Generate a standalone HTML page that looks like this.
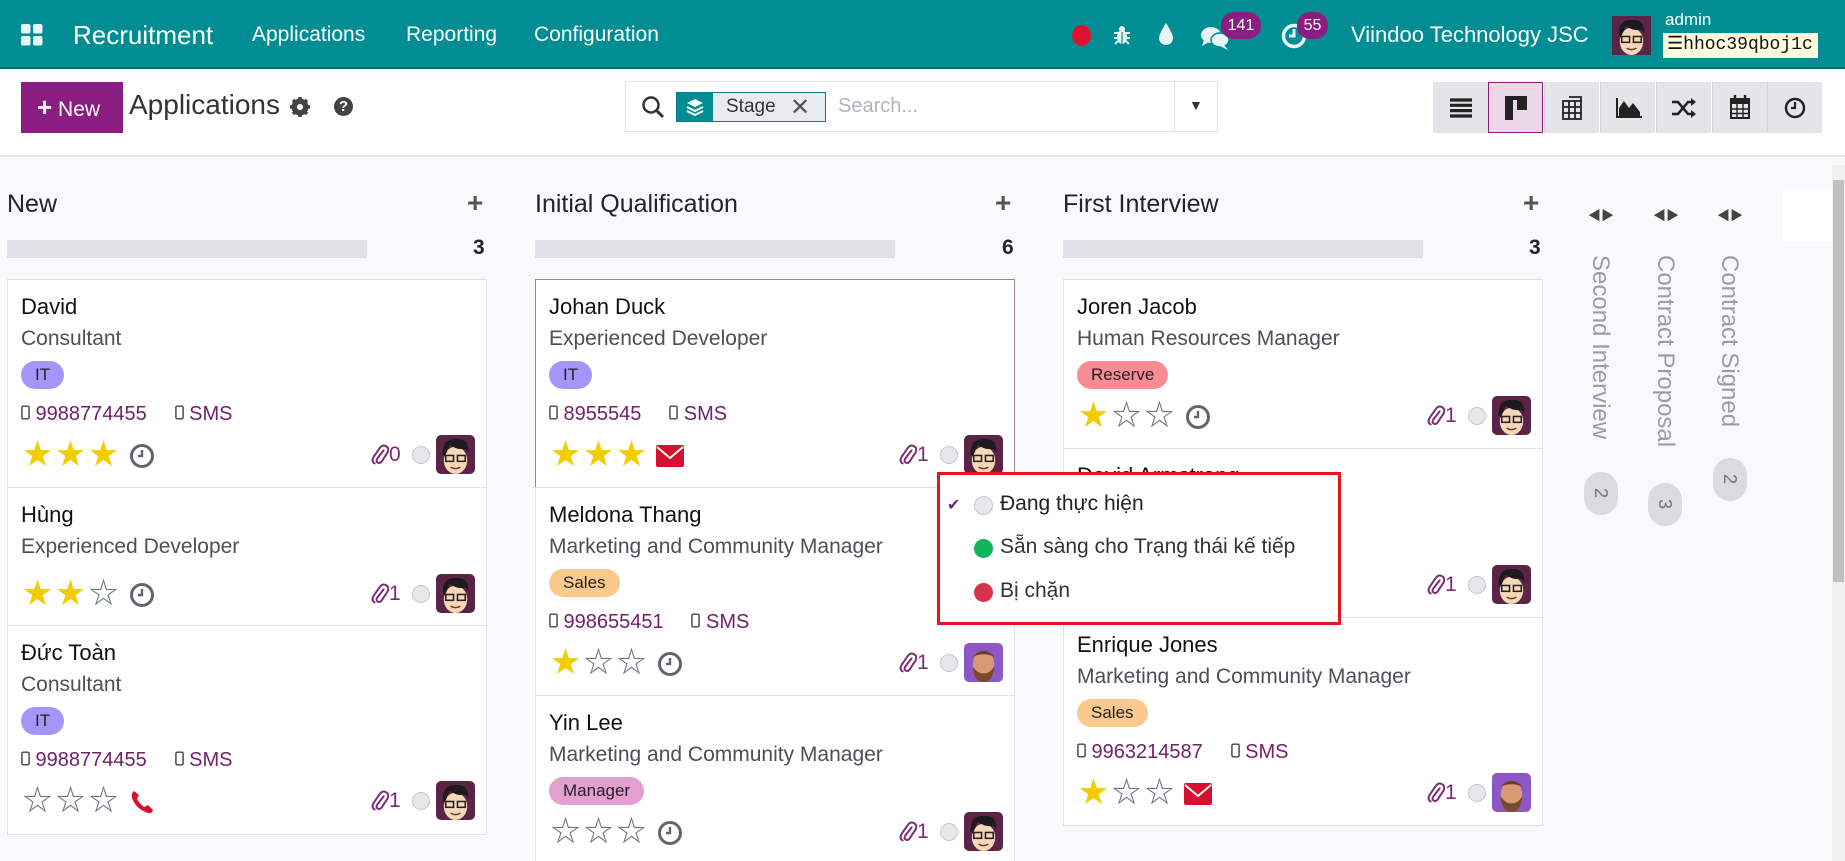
<!DOCTYPE html>
<html style="overflow:hidden;height:861px"><head><meta charset="utf-8">
<style>
*{box-sizing:border-box;margin:0;padding:0}
body{width:1845px;height:861px;overflow:hidden;font-family:"Liberation Sans","Noto Sans CJK SC",sans-serif;background:#f8f9fa;position:relative;color:#212529}
.abs{position:absolute}
.nav{left:0;top:0;width:1845px;height:69px;background:#018d94;border-bottom:2px solid #0b6a70;color:#fff}
.nav .t{position:absolute;top:1px;line-height:68px;white-space:nowrap}
.cp{left:0;top:69px;width:1845px;height:88px;background:#fff;border-bottom:2px solid #e3e6ea}
.ch{position:absolute;left:0;top:188px;font-size:25px;color:#212529}
.card{position:absolute;width:480px;background:#fff;border:1px solid #dee2e6;overflow:hidden}
.card>div{position:absolute;left:13px;white-space:nowrap}
.n{top:13px;font-size:22px;line-height:28px;color:#111}
.s{top:45px;font-size:21px;line-height:28px;color:#495057}
.tg{top:81px;height:28px;line-height:28px;border-radius:14px;padding:0 14px;font-size:17px;color:#222}
.p{top:120px;font-size:20px;line-height:28px;color:#71206b}
.f{height:40px;width:454px}
.f1{top:155px}.f2{top:86px}.f3{top:116px}
.st{position:absolute;top:4px;font-size:29px;line-height:32px;width:33px;text-align:center}
.y{color:#f3cc00}.g{color:#6c757d}
.ic{position:absolute;top:8px;left:108px}
.clip{position:absolute;left:350px;top:8px;font-size:21px;color:#7d2b76;line-height:24px}
.clip svg{vertical-align:-4px}
.dot{position:absolute;left:391px;top:11px;width:18px;height:18px;border-radius:50%;background:#e5e7ea;border:1px solid #c5c9ce}
.av{position:absolute;left:415px;top:0;width:39px;height:39px;border-radius:5px;overflow:hidden}
.vt{position:absolute;writing-mode:vertical-rl;font-size:24px;color:#9a9ea3;top:255px;white-space:nowrap}
.vb{position:absolute;width:34px;border-radius:17px;background:#d9dbdf;color:#6c757d;writing-mode:vertical-rl;font-size:18px;text-align:center;line-height:34px}
.vbtn{position:absolute;top:82px;width:55px;height:51px;background:#e3e5e8;border-left:1px solid #d0d3d7}
</style></head><body>
<svg width="0" height="0" style="position:absolute">
<defs>
<symbol id="a1" viewBox="0 0 40 40"><rect width="40" height="40" fill="#5b2346"/><ellipse cx="20" cy="26" rx="12" ry="14" fill="#f6d8b8"/><path d="M7 20 Q6 4 20 4 Q34 3 33 18 L30 14 Q22 16 14 10 Q12 16 9 22Z" fill="#1d1a1f"/><rect x="10" y="21" width="8" height="6" fill="none" stroke="#222" stroke-width="1.6"/><rect x="22" y="21" width="8" height="6" fill="none" stroke="#222" stroke-width="1.6"/><path d="M15 33 Q20 36 25 33" stroke="#6b3a2a" stroke-width="1.5" fill="none"/></symbol>
<symbol id="a2" viewBox="0 0 40 40"><rect width="40" height="40" fill="#8d58c4"/><ellipse cx="20" cy="22" rx="11" ry="14" fill="#d79a72"/><path d="M9 24 Q10 40 20 40 Q30 40 31 24 Q26 32 20 31 Q14 32 9 24Z" fill="#7a4a2a"/><path d="M9 14 Q20 2 31 14 Q20 9 9 14Z" fill="#6a3e26"/></symbol>
<symbol id="clk" viewBox="0 0 26 26"><circle cx="13" cy="13" r="10.5" fill="none" stroke="#5f6670" stroke-width="3"/><path d="M13 7 V13 H9" stroke="#5f6670" stroke-width="2.4" fill="none"/></symbol>
<symbol id="ph" viewBox="0 0 10 16"><rect x="1" y="1" width="8" height="14" rx="1.5" fill="none" stroke="#444" stroke-width="1.6"/></symbol>
<symbol id="pc" viewBox="0 0 20 24"><path d="M14 8 L7 17 Q5 20 7.5 21.5 Q10 23 12 20 L18 11 Q21 6 17 3.5 Q13 1 10 5 L3 15 Q0 20 4 22.5" fill="none" stroke="#7d2b76" stroke-width="2.2" stroke-linecap="round"/></symbol>
</defs></svg>

<!-- NAVBAR -->
<div class="abs nav">
 <svg class="abs" style="left:21px;top:24px" width="22" height="22" viewBox="0 0 22 22"><rect x="0" y="0" width="9.5" height="9.5" rx="2" fill="#e8f6f6"/><rect x="12" y="0" width="9.5" height="9.5" rx="2" fill="#e8f6f6"/><rect x="0" y="12" width="9.5" height="9.5" rx="2" fill="#e8f6f6"/><rect x="12" y="12" width="9.5" height="9.5" rx="2" fill="#e8f6f6"/></svg>
 <div class="t" style="left:73px;font-size:26px">Recruitment</div>
 <div class="t" style="left:252px;font-size:21px">Applications</div>
 <div class="t" style="left:406px;font-size:21px">Reporting</div>
 <div class="t" style="left:534px;font-size:21px">Configuration</div>
 <div class="abs" style="left:1072px;top:25px;width:19px;height:21px;border-radius:50%;background:#e0102f"></div>
 <svg class="abs" style="left:1113px;top:24px" width="18" height="22" viewBox="0 0 18 22"><ellipse cx="9" cy="13" rx="5" ry="7" fill="#e6f4f4"/><circle cx="9" cy="5" r="3" fill="#e6f4f4"/><path d="M1 9 H17 M1 14 H17 M2 20 L5 17 M16 20 L13 17" stroke="#e6f4f4" stroke-width="2"/><path d="M9 8 V20" stroke="#018d94" stroke-width="1.2"/></svg>
 <svg class="abs" style="left:1158px;top:22px" width="16" height="24" viewBox="0 0 16 24"><path d="M8 1 Q15 12 15 16 A7 7 0 0 1 1 16 Q1 12 8 1Z" fill="#e6f4f4"/></svg>
 <svg class="abs" style="left:1200px;top:25px" width="30" height="26" viewBox="0 0 30 26"><ellipse cx="11" cy="10" rx="10" ry="8" fill="#e6f4f4"/><path d="M4 15 L2 21 L9 17Z" fill="#e6f4f4"/><ellipse cx="20" cy="15" rx="9" ry="7" fill="#e6f4f4" stroke="#018d94" stroke-width="1.5"/><path d="M24 20 L28 25 L20 21Z" fill="#e6f4f4"/></svg>
 <div class="abs" style="left:1221px;top:12px;width:40px;height:27px;border-radius:13px;background:#8b1d82;font-size:16px;text-align:center;line-height:27px">141</div>
 <svg class="abs" style="left:1280px;top:22px" width="28" height="28" viewBox="0 0 28 28"><circle cx="14" cy="14" r="10.5" fill="none" stroke="#e6f4f4" stroke-width="3.5"/><path d="M14 7 V14 H9" stroke="#e6f4f4" stroke-width="3" fill="none"/></svg>
 <div class="abs" style="left:1297px;top:12px;width:31px;height:27px;border-radius:13px;background:#8b1d82;font-size:16px;text-align:center;line-height:27px">55</div>
 <div class="t" style="left:1351px;font-size:22px">Viindoo Technology JSC</div>
 <svg class="abs" style="left:1612px;top:16px" width="39" height="39"><use href="#a1"/></svg>
 <div class="abs" style="left:1665px;top:10px;font-size:17px">admin</div>
 <div class="abs" style="left:1663px;top:33px;width:155px;height:25px;background:#fffbe0;color:#111;font-family:'Liberation Mono',monospace;font-size:18px;line-height:25px;padding-left:4px">&#9776;hhoc39qboj1c</div>
</div>

<!-- CONTROL PANEL -->
<div class="abs cp">
 <div class="abs" style="left:21px;top:13px;width:102px;height:51px;background:#8b1d82;color:#fff;font-size:21px;line-height:51px;padding-left:16px"><b style="font-size:26px">+</b> New</div>
 <div class="abs" style="left:129px;top:20px;font-size:28px;color:#333">Applications</div>
 <svg class="abs" style="left:290px;top:28px" width="20" height="20" viewBox="0 0 20 20"><circle cx="10" cy="10" r="6.5" fill="none" stroke="#444" stroke-width="4"/><path d="M10 0 V20 M0 10 H20 M3 3 L17 17 M17 3 L3 17" stroke="#444" stroke-width="3.5"/><circle cx="10" cy="10" r="3" fill="#fff"/></svg>
 <div class="abs" style="left:334px;top:28px;width:19px;height:19px;border-radius:50%;background:#444;color:#fff;font-size:15px;font-weight:bold;text-align:center;line-height:19px">?</div>
 <div class="abs" style="left:625px;top:12px;width:593px;height:51px;border:1px solid #dee2e6;background:#fff">
  <svg class="abs" style="left:15px;top:13px" width="24" height="24" viewBox="0 0 24 24"><circle cx="10" cy="10" r="7.5" fill="none" stroke="#333" stroke-width="2.5"/><path d="M15.5 15.5 L22 22" stroke="#333" stroke-width="3"/></svg>
  <div class="abs" style="left:50px;top:10px;width:150px;height:30px;border:1px solid #0a7d84;background:#e9ecef">
   <div class="abs" style="left:0;top:0;width:36px;height:28px;background:#018d94"></div>
   <svg class="abs" style="left:9px;top:5px" width="18" height="18" viewBox="0 0 18 18"><path d="M9 1 L17 5 L9 9 L1 5Z" fill="#fff"/><path d="M1 9 L9 13 L17 9 M1 13 L9 17 L17 13" stroke="#fff" stroke-width="2" fill="none"/></svg>
   <div class="abs" style="left:49px;top:3px;font-size:19px;color:#333">Stage</div>
   <div class="abs" style="left:113px;top:0px;font-size:24px;color:#555">✕</div>
  </div>
  <div class="abs" style="left:212px;top:13px;font-size:20px;color:#adb5bd">Search...</div>
  <div class="abs" style="left:548px;top:0;width:1px;height:49px;background:#dee2e6"></div>
  <div class="abs" style="left:563px;top:15px;font-size:14px;color:#333">▼</div>
 </div>
 <div class="vbtn" style="left:1433px;top:13px;border-left:none"></div>
 <div class="vbtn" style="left:1488px;top:13px;background:#ead7e7;border:1px solid #8b1d82"></div>
 <div class="vbtn" style="left:1544px;top:13px"></div>
 <div class="vbtn" style="left:1600px;top:13px"></div>
 <div class="vbtn" style="left:1656px;top:13px"></div>
 <div class="vbtn" style="left:1712px;top:13px"></div>
 <div class="vbtn" style="left:1767px;top:13px;width:55px"></div>
 <svg class="abs" style="left:1450px;top:29px" width="22" height="20" viewBox="0 0 22 20"><path d="M0 2 H22 M0 7.3 H22 M0 12.6 H22 M0 18 H22" stroke="#222" stroke-width="3.2"/></svg>
 <svg class="abs" style="left:1505px;top:27px" width="22" height="24" viewBox="0 0 22 24"><rect x="0" y="0" width="22" height="4" fill="#222"/><rect x="0" y="0" width="8" height="24" fill="#222"/><rect x="12" y="0" width="10" height="14" fill="#222"/></svg>
 <svg class="abs" style="left:1562px;top:27px" width="20" height="24" viewBox="0 0 20 24"><rect x="1" y="5" width="18" height="18" fill="none" stroke="#222" stroke-width="1.8"/><path d="M1 11 H19 M1 17 H19 M7 5 V23 M13 5 V23 M7 1 H19 V5" stroke="#222" stroke-width="1.8" fill="none"/></svg>
 <svg class="abs" style="left:1616px;top:29px" width="26" height="20" viewBox="0 0 26 20"><path d="M1 0 V19 H26" stroke="#222" stroke-width="2" fill="none"/><path d="M3 18 V10 L8 3 L13 10 L17 5 L24 14 V18Z" fill="#222"/></svg>
 <svg class="abs" style="left:1672px;top:29px" width="24" height="20" viewBox="0 0 24 20"><path d="M0 4 H6 L16 16 H21 M0 16 H6 L16 4 H21" stroke="#222" stroke-width="2.6" fill="none"/><path d="M19 0 L24 4 L19 8Z M19 12 L24 16 L19 20Z" fill="#222"/></svg>
 <svg class="abs" style="left:1730px;top:26px" width="20" height="24" viewBox="0 0 20 24"><rect x="1" y="4" width="18" height="19" fill="none" stroke="#222" stroke-width="2"/><rect x="1" y="4" width="18" height="5" fill="#222"/><path d="M5 0 V6 M15 0 V6" stroke="#222" stroke-width="2.4"/><path d="M1 14 H19 M1 18.5 H19 M7 9 V23 M13 9 V23" stroke="#222" stroke-width="1.4"/></svg>
 <svg class="abs" style="left:1784px;top:28px" width="22" height="22" viewBox="0 0 22 22"><circle cx="11" cy="11" r="9" fill="none" stroke="#222" stroke-width="2.4"/><path d="M11 5 V11 H7" stroke="#222" stroke-width="2.2" fill="none"/></svg>
</div>

<!-- COLUMN HEADERS -->
<div class="ch" style="left:7px;top:190px">New</div>
<div class="ch" style="left:535px;top:190px">Initial Qualification</div>
<div class="ch" style="left:1063px;top:190px">First Interview</div>
<div class="abs" style="left:467px;top:187px;font-size:28px;color:#555;font-weight:bold">+</div>
<div class="abs" style="left:995px;top:187px;font-size:28px;color:#555;font-weight:bold">+</div>
<div class="abs" style="left:1523px;top:187px;font-size:28px;color:#555;font-weight:bold">+</div>
<div class="abs" style="left:7px;top:240px;width:360px;height:18px;background:#dee2e6"></div>
<div class="abs" style="left:535px;top:240px;width:360px;height:18px;background:#dee2e6"></div>
<div class="abs" style="left:1063px;top:240px;width:360px;height:18px;background:#dee2e6"></div>
<div class="abs" style="left:473px;top:236px;font-size:21px;font-weight:bold">3</div>
<div class="abs" style="left:1002px;top:236px;font-size:21px;font-weight:bold">6</div>
<div class="abs" style="left:1529px;top:236px;font-size:21px;font-weight:bold">3</div>

<!-- COLUMN 1 -->
<div class="card" style="left:7px;top:279px;height:209px">
 <div class="n">David</div><div class="s">Consultant</div>
 <div class="tg" style="background:#a396f7">IT</div>
 <div class="p"><svg width="9" height="15"><use href="#ph"/></svg> 9988774455 &nbsp;&nbsp;&nbsp; <svg width="9" height="15"><use href="#ph"/></svg> SMS</div>
 <div class="f f1"><span class="st y" style="left:0">★</span><span class="st y" style="left:33px">★</span><span class="st y" style="left:66px">★</span><svg class="ic" width="26" height="26"><use href="#clk"/></svg><span class="clip"><svg width="18" height="22"><use href="#pc"/></svg>0</span><span class="dot"></span><svg class="av" width="39" height="39"><use href="#a1"/></svg></div>
</div>
<div class="card" style="left:7px;top:487px;height:139px">
 <div class="n">Hùng</div><div class="s">Experienced Developer</div>
 <div class="f f2"><span class="st y" style="left:0">★</span><span class="st y" style="left:33px">★</span><span class="st g" style="left:66px">☆</span><svg class="ic" width="26" height="26"><use href="#clk"/></svg><span class="clip"><svg width="18" height="22"><use href="#pc"/></svg>1</span><span class="dot"></span><svg class="av" width="39" height="39"><use href="#a1"/></svg></div>
</div>
<div class="card" style="left:7px;top:625px;height:210px">
 <div class="n">Đức Toàn</div><div class="s">Consultant</div>
 <div class="tg" style="background:#a396f7">IT</div>
 <div class="p"><svg width="9" height="15"><use href="#ph"/></svg> 9988774455 &nbsp;&nbsp;&nbsp; <svg width="9" height="15"><use href="#ph"/></svg> SMS</div>
 <div class="f f1"><span class="st g" style="left:0">☆</span><span class="st g" style="left:33px">☆</span><span class="st g" style="left:66px">☆</span><svg class="ic" width="26" height="26" viewBox="0 0 26 26"><path d="M5 2 Q2 4 3 9 Q7 20 19 24 Q23 25 24 21 L19 16 L15 18 Q10 14 8 10 L10 6Z" fill="#d6102f"/></svg><span class="clip"><svg width="18" height="22"><use href="#pc"/></svg>1</span><span class="dot"></span><svg class="av" width="39" height="39"><use href="#a1"/></svg></div>
</div>

<!-- COLUMN 2 -->
<div class="card" style="left:535px;top:279px;height:209px;border-color:#a77aa3">
 <div class="n">Johan Duck</div><div class="s">Experienced Developer</div>
 <div class="tg" style="background:#a396f7">IT</div>
 <div class="p"><svg width="9" height="15"><use href="#ph"/></svg> 8955545 &nbsp;&nbsp;&nbsp; <svg width="9" height="15"><use href="#ph"/></svg> SMS</div>
 <div class="f f1"><span class="st y" style="left:0">★</span><span class="st y" style="left:33px">★</span><span class="st y" style="left:66px">★</span><svg class="ic" width="30" height="26" viewBox="0 0 30 26" style="left:106px"><rect x="1" y="2" width="28" height="22" rx="2" fill="#d6102f"/><path d="M2 4 L15 15 L28 4" stroke="#fff" stroke-width="2" fill="none"/></svg><span class="clip"><svg width="18" height="22"><use href="#pc"/></svg>1</span><span class="dot"></span><svg class="av" width="39" height="39"><use href="#a1"/></svg></div>
</div>
<div class="card" style="left:535px;top:487px;height:209px">
 <div class="n">Meldona Thang</div><div class="s">Marketing and Community Manager</div>
 <div class="tg" style="background:#fbc88e">Sales</div>
 <div class="p"><svg width="9" height="15"><use href="#ph"/></svg> 998655451 &nbsp;&nbsp;&nbsp; <svg width="9" height="15"><use href="#ph"/></svg> SMS</div>
 <div class="f f1"><span class="st y" style="left:0">★</span><span class="st g" style="left:33px">☆</span><span class="st g" style="left:66px">☆</span><svg class="ic" width="26" height="26"><use href="#clk"/></svg><span class="clip"><svg width="18" height="22"><use href="#pc"/></svg>1</span><span class="dot"></span><svg class="av" width="39" height="39"><use href="#a2"/></svg></div>
</div>
<div class="card" style="left:535px;top:695px;height:170px">
 <div class="n">Yin Lee</div><div class="s">Marketing and Community Manager</div>
 <div class="tg" style="background:#e39fd0">Manager</div>
 <div class="f f3"><span class="st g" style="left:0">☆</span><span class="st g" style="left:33px">☆</span><span class="st g" style="left:66px">☆</span><svg class="ic" width="26" height="26"><use href="#clk"/></svg><span class="clip"><svg width="18" height="22"><use href="#pc"/></svg>1</span><span class="dot"></span><svg class="av" width="39" height="39"><use href="#a1"/></svg></div>
</div>

<!-- COLUMN 3 -->
<div class="card" style="left:1063px;top:279px;height:170px">
 <div class="n">Joren Jacob</div><div class="s">Human Resources Manager</div>
 <div class="tg" style="background:#f98b93">Reserve</div>
 <div class="f f3"><span class="st y" style="left:0">★</span><span class="st g" style="left:33px">☆</span><span class="st g" style="left:66px">☆</span><svg class="ic" width="26" height="26"><use href="#clk"/></svg><span class="clip"><svg width="18" height="22"><use href="#pc"/></svg>1</span><span class="dot"></span><svg class="av" width="39" height="39"><use href="#a1"/></svg></div>
</div>
<div class="card" style="left:1063px;top:448px;height:170px">
 <div class="n">David Armstrong</div><div class="s">Experienced Developer</div>
 <div class="f f3"><span class="clip"><svg width="18" height="22"><use href="#pc"/></svg>1</span><span class="dot"></span><svg class="av" width="39" height="39"><use href="#a1"/></svg></div>
</div>
<div class="card" style="left:1063px;top:617px;height:209px">
 <div class="n">Enrique Jones</div><div class="s">Marketing and Community Manager</div>
 <div class="tg" style="background:#fbc88e">Sales</div>
 <div class="p"><svg width="9" height="15"><use href="#ph"/></svg> 9963214587 &nbsp;&nbsp;&nbsp; <svg width="9" height="15"><use href="#ph"/></svg> SMS</div>
 <div class="f f1"><span class="st y" style="left:0">★</span><span class="st g" style="left:33px">☆</span><span class="st g" style="left:66px">☆</span><svg class="ic" width="30" height="26" viewBox="0 0 30 26" style="left:106px"><rect x="1" y="2" width="28" height="22" rx="2" fill="#d6102f"/><path d="M2 4 L15 15 L28 4" stroke="#fff" stroke-width="2" fill="none"/></svg><span class="clip"><svg width="18" height="22"><use href="#pc"/></svg>1</span><span class="dot"></span><svg class="av" width="39" height="39"><use href="#a2"/></svg></div>
</div>

<!-- POPUP -->
<div class="abs" style="left:937px;top:472px;width:404px;height:153px;background:#fff;border:3px solid #e8141c">
 <div class="abs" style="left:7px;top:20px;color:#7a1f70;font-size:16px">✔</div>
 <div class="abs" style="left:34px;top:21px;width:19px;height:19px;border-radius:50%;background:#e5e7ea;border:1px solid #c5c9ce"></div>
 <div class="abs" style="left:60px;top:17px;font-size:21px;color:#222">Đang thực hiện</div>
 <div class="abs" style="left:34px;top:64px;width:19px;height:19px;border-radius:50%;background:#10b55a"></div>
 <div class="abs" style="left:60px;top:60px;font-size:21px;color:#333">Sẵn sàng cho Trạng thái kế tiếp</div>
 <div class="abs" style="left:34px;top:108px;width:19px;height:19px;border-radius:50%;background:#d43548"></div>
 <div class="abs" style="left:60px;top:104px;font-size:21px;color:#333">Bị chặn</div>
</div>

<!-- FOLDED COLUMNS -->
<div class="abs" style="left:1588px;top:205px;font-size:13px;color:#444">◀▶</div>
<div class="abs" style="left:1653px;top:205px;font-size:13px;color:#444">◀▶</div>
<div class="abs" style="left:1717px;top:205px;font-size:13px;color:#444">◀▶</div>
<div class="vt" style="left:1586px">Second Interview</div>
<div class="vt" style="left:1651px">Contract Proposal</div>
<div class="vt" style="left:1715px">Contract Signed</div>
<div class="vb" style="left:1584px;top:472px;height:43px">2</div>
<div class="vb" style="left:1648px;top:483px;height:43px">3</div>
<div class="vb" style="left:1713px;top:458px;height:43px">2</div>
<div class="abs" style="left:1783px;top:190px;width:49px;height:51px;background:#fff"></div>
<div class="abs" style="left:1832px;top:165px;width:13px;height:696px;background:#f1f1f1"></div>
<div class="abs" style="left:1833px;top:180px;width:11px;height:402px;background:#c1c1c1"></div>
</body></html>
